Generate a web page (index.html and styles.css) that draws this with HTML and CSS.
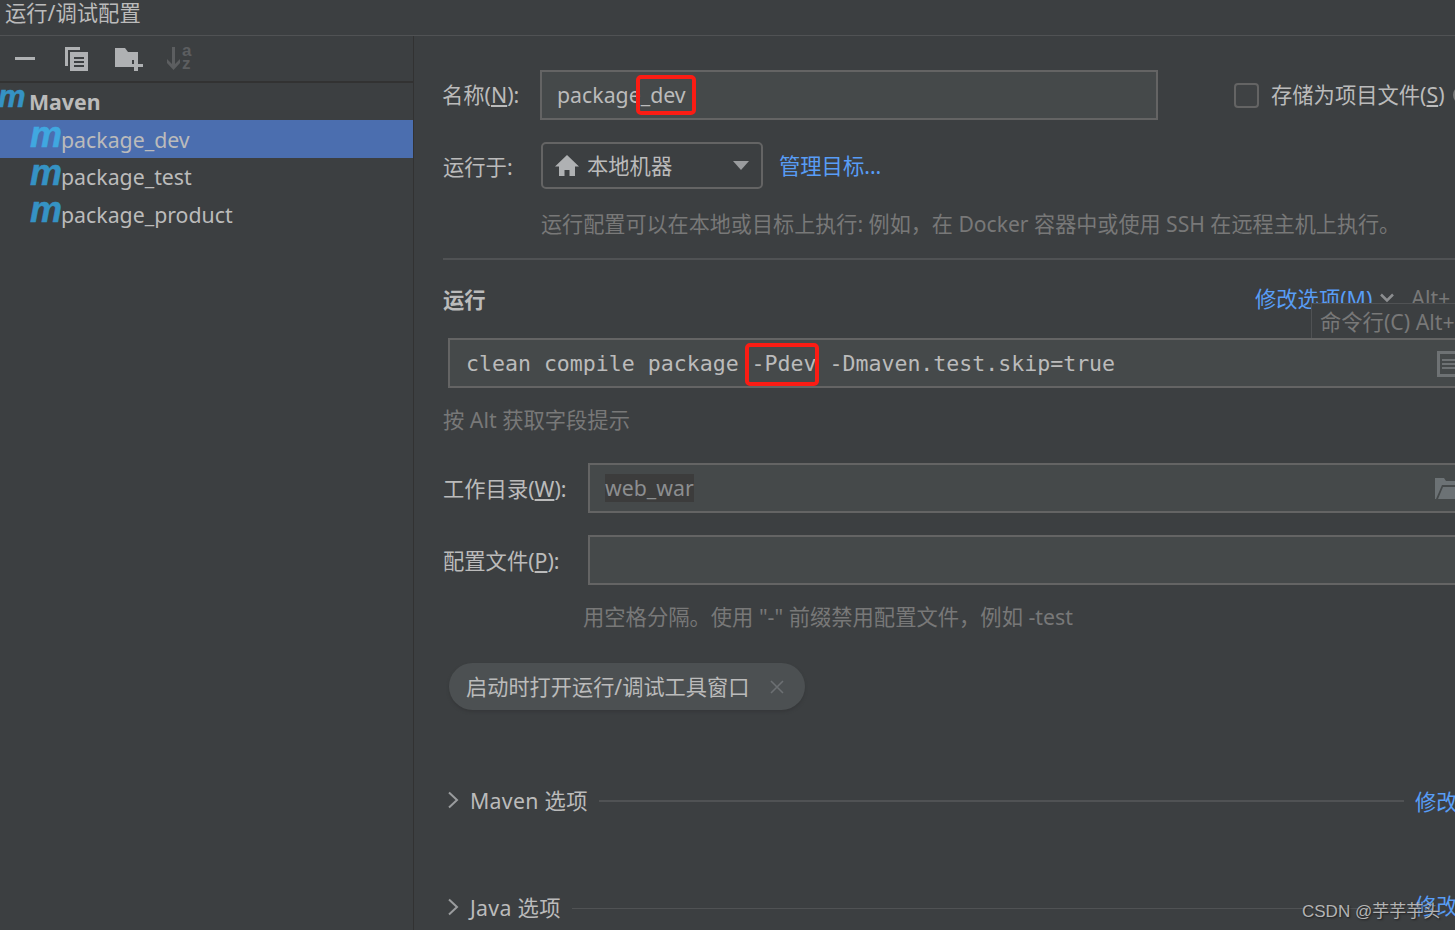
FILE: index.html
```html
<!DOCTYPE html>
<html lang="zh">
<head>
<meta charset="utf-8">
<title>运行/调试配置</title>
<link rel="stylesheet" href="styles.css">
</head>
<body>
<div class="app">
  <header class="titlebar">运行/调试配置</header>
  <div class="main">
    <aside class="sidebar">
      <div class="toolbar">
        <svg class="tool tool-minus" width="24" height="24" viewBox="0 0 24 24"><rect x="2" y="10" width="20" height="3" fill="#afb1b3"/></svg>
        <svg class="tool tool-copy" width="25" height="26" viewBox="0 0 25 26"><path d="M1 1h15v3H4v16H1z" fill="#afb1b3"/><path d="M6 6h18v19H6z" fill="#afb1b3"/><path d="M10 11h10v2H10zM10 15h10v2H10zM10 19h10v2H10z" fill="#3c3f41"/></svg>
        <svg class="tool tool-folder" width="28" height="24" viewBox="0 0 28 24"><path d="M0 1h10l3 4h10v8h-6v7H0z" fill="#afb1b3"/><path d="M19 12h4v5h5v3h-5v4h-4v-4h-5v-3h5z" fill="#afb1b3"/></svg>
        <svg class="tool-sort" width="16" height="26" viewBox="0 0 16 26"><path d="M6 1h3v17l5-5v4l-6.500 7L1 17v-4l5 5z" fill="#5c5e60"/></svg>
        <span class="sort-letters"><span>a</span><span>z</span></span>
      </div>
      <div class="tree">
        <div class="group"><span class="maven-m root">m</span><span class="group-name">Maven</span></div>
        <div class="item selected"><span class="maven-m bright">m</span><span>package_dev</span></div>
        <div class="item"><span class="maven-m">m</span><span>package_test</span></div>
        <div class="item"><span class="maven-m">m</span><span>package_product</span></div>
      </div>
    </aside>

    <section class="pane">
      <div class="row name-row">
        <label class="label name-label">名称(<u>N</u>):</label>
        <div class="field name-field">package_dev<span class="mark mark-name"></span></div>
        <span class="checkbox"></span>
        <span class="check-label">存储为项目文件(<u>S</u>)</span>
        <svg class="help" width="18" height="18" viewBox="0 0 18 18"><circle cx="9" cy="9" r="8" fill="none" stroke="#787878" stroke-width="2"/></svg>
      </div>

      <div class="row run-row">
        <label class="label run-label">运行于:</label>
        <div class="select">
          <svg width="26" height="24" viewBox="0 0 26 24"><path d="M13 1 25 12.500h-4V22h-5.500v-6h-5v6H5v-9.500H1z" fill="#afb1b3"/></svg>
          <span class="select-text">本地机器</span>
          <svg class="select-arrow" width="16" height="10" viewBox="0 0 16 10"><path d="M0 0h16L8 9z" fill="#9a9c9e"/></svg>
        </div>
        <a class="link manage">管理目标...</a>
      </div>

      <p class="hint run-hint">运行配置可以在本地或目标上执行: 例如，在 Docker 容器中或使用 SSH 在远程主机上执行。</p>

      <div class="divider"></div>

      <div class="run-head">
        <h2 class="heading">运行</h2>
        <a class="link modify">修改选项(<u>M</u>)</a>
        <svg class="modify-chevron" width="16" height="10" viewBox="0 0 16 10"><path d="M2 1.500l6 6 6-6" fill="none" stroke="#8c8e90" stroke-width="2.500"/></svg>
        <span class="shortcut">Alt+</span>
        <div class="tooltip">命令行(C) Alt+</div>
      </div>

      <div class="field command">
        <span>clean compile package -Pdev -Dmaven.test.skip=true</span>
        <span class="mark mark-cmd"></span>
        <svg class="cmd-icon" width="18" height="26" viewBox="0 0 18 26"><path d="M0 0h18v26H0z" fill="#6e7274"/><path d="M3 3h15v20H3z" fill="#45494a"/><path d="M5 8h13v2H5zM5 12h13v2H5zM5 16h13v2H5z" fill="#6e7274"/></svg>
      </div>

      <p class="hint alt-hint">按 Alt 获取字段提示</p>

      <div class="row dir-row">
        <label class="label wide-label">工作目录(<u>W</u>):</label>
        <div class="field wide-field"><span class="macro">web_war</span>
          <svg class="folder" width="24" height="22" viewBox="0 0 24 22"><path d="M0 0h9l2 3h13v4H7L1 21H0z" fill="#6c7275"/><path d="M8 9h16v12H3z" fill="#6c7275"/></svg>
        </div>
      </div>

      <div class="row cfg-row">
        <label class="label wide-label">配置文件(<u>P</u>):</label>
        <div class="field wide-field"></div>
      </div>

      <p class="hint cfg-hint">用空格分隔。使用 "-" 前缀禁用配置文件，例如 -test</p>

      <div class="chip">
        <span class="chip-text">启动时打开运行/调试工具窗口</span>
        <svg class="chip-x" width="16" height="16" viewBox="0 0 16 16"><path d="M2 2l12 12M14 2 2 14" stroke="#6c7073" stroke-width="1.600" fill="none"/></svg>
      </div>

      <div class="section maven-section">
        <svg class="chevron" width="12" height="18" viewBox="0 0 12 18"><path d="M2 1.500 10 9l-8 7.500" fill="none" stroke="#9a9c9e" stroke-width="2"/></svg>
        <span class="section-title">Maven 选项</span>
        <span class="section-line"></span>
        <a class="link section-link">修改选项</a>
      </div>

      <div class="section java-section">
        <svg class="chevron" width="12" height="18" viewBox="0 0 12 18"><path d="M2 1.500 10 9l-8 7.500" fill="none" stroke="#9a9c9e" stroke-width="2"/></svg>
        <span class="section-title">Java 选项</span>
        <span class="section-line thin"></span>
        <a class="link section-link raised">修改选项</a>
      </div>

      <div class="watermark">CSDN @芋芋芋头</div>
    </section>
  </div>
</div>
</body>
</html>
```

FILE: styles.css
```css
* { box-sizing: border-box; }

html, body {
  margin: 0;
  height: 100%;
  background: #3c3f41;
}

body {
  font-family: "Noto Sans", "Noto Sans CJK SC", sans-serif;
  font-size: 21.300px;
  color: #bbbbbb;
  overflow: hidden;
}

.app {
  width: 1455px;
  height: 930px;
  display: flex;
  flex-direction: column;
  overflow: hidden;
}

.titlebar {
  height: 36px;
  flex: none;
  padding-left: 5px;
  line-height: 25px;
  border-bottom: 1px solid #505254;
  white-space: nowrap;
}

.main {
  flex: 1;
  display: flex;
  min-height: 0;
}

/* sidebar */
.sidebar {
  width: 414px;
  flex: none;
  border-right: 1px solid #323232;
}

.toolbar {
  height: 47px;
  display: flex;
  align-items: center;
  padding: 0 0 0 13px;
  border-bottom: 2px solid #323232;
}

.tool, .tool-sort { flex: none; }
.tool-minus { margin-right: 27px; }
.tool-copy { margin-right: 26px; }
.tool-folder { margin-right: 23px; }

.sort-letters {
  display: flex;
  flex-direction: column;
  font: bold 17px/13px "Liberation Sans", sans-serif;
  color: #5c5e60;
  margin-top: -3px;
}

.group, .item {
  display: flex;
  align-items: center;
  height: 38px;
  white-space: nowrap;
}

.group { height: 37px; }
.group-name { font-weight: 700; margin-left: 7px; }

.item { padding: 0 0 0 30px; }
.item:nth-child(3) { height: 37px; }
.item.selected { background: #4b6eaf; }

.maven-m {
  font: italic 700 36px/30px "Liberation Sans", sans-serif;
  color: #3592c4;
  -webkit-text-stroke: 0.500px currentColor;
  width: 31px;
  margin-top: -8px;
  flex: none;
  letter-spacing: -1px;
}

.maven-m.root { width: 24px; margin-left: -2px; margin-top: -9px; font-size: 31px; }
.maven-m.bright { color: #40a8e0; }

/* right pane */
.pane {
  flex: 1;
  min-width: 0;
  position: relative;
  padding: 34px 0 0 29px;
  overflow: hidden;
}

.row {
  display: flex;
  align-items: center;
  white-space: nowrap;
}

.label { flex: none; }

.field {
  position: relative;
  flex: none;
  background: #45494a;
  border: 2px solid #646464;
  white-space: nowrap;
}

.name-row { height: 50px; }
.name-label { width: 98px; margin-left: -1px; padding-bottom: 4px; }

.name-field {
  width: 618px;
  height: 50px;
  line-height: 46px;
  padding-left: 15px;
}

.mark {
  position: absolute;
  border: 4px solid #fb1c14;
  border-radius: 5px;
}

.mark-name { left: 94px; top: 3px; width: 60px; height: 40px; }

.checkbox {
  width: 25px;
  height: 25px;
  flex: none;
  margin-left: 76px;
  border: 2px solid #646464;
  border-radius: 4px;
  background: #3f4244;
}

.check-label { margin-left: 12px; padding-bottom: 4px; }
.help { flex: none; margin-left: 8px; }

.run-row { height: 47px; margin-top: 22px; }
.run-label { width: 98px; padding-bottom: 1px; }

.select {
  width: 222px;
  height: 47px;
  flex: none;
  display: flex;
  align-items: center;
  padding-left: 11px;
  border: 2px solid #646464;
  border-radius: 5px;
}

.select-text { margin-left: 7px; padding-bottom: 3px; }
.select-arrow { margin-left: 61px; }

.link { color: #589df6; }
.manage { margin-left: 16px; padding-bottom: 3px; }

.hint {
  margin: 0;
  color: #787878;
  white-space: nowrap;
  line-height: 30px;
}

.run-hint { margin: 20px 0 0 98px; font-size: 21.100px; }

.divider {
  height: 2px;
  margin-top: 19px;
  background: #505254;
}

.run-head {
  position: relative;
  display: flex;
  align-items: center;
  height: 40px;
  margin-top: 18px;
  white-space: nowrap;
}

.heading {
  margin: 0;
  font-size: inherit;
  font-weight: 700;
  width: 812px;
  flex: none;
}

.modify, .shortcut { padding-bottom: 2px; }
.modify-chevron { margin-left: 7px; flex: none; }
.shortcut { margin-left: 16px; color: #787878; }

.tooltip {
  position: absolute;
  left: 868px;
  top: 25px;
  width: 200px;
  height: 39px;
  line-height: 35px;
  padding-left: 8px;
  background: #3c3f41;
  border: 1px solid #505254;
  color: #787878;
}

.command {
  width: 1030px;
  height: 50px;
  margin: 20px 0 0 5px;
  padding-left: 16px;
  line-height: 48px;
  font-family: "DejaVu Sans Mono", monospace;
  font-size: 21.570px;
}

.mark-cmd { left: 295px; top: 3px; width: 74px; height: 43px; }
.cmd-icon { position: absolute; left: 987px; top: 11px; }

.alt-hint { margin-top: 17px; }

.dir-row { margin-top: 28px; }
.cfg-row { margin-top: 22px; }
.wide-label { width: 145px; padding-bottom: 2px; }

.wide-field {
  width: 900px;
  height: 50px;
  line-height: 46px;
  padding-left: 15px;
}

.macro {
  background: #3c3c3c;
  color: #8c8e90;
  display: inline-block;
  line-height: 28px;
}

.folder { position: absolute; left: 845px; top: 13px; }

.cfg-hint { margin: 17px 0 0 140px; }

.chip {
  width: 356px;
  height: 47px;
  margin: 31px 0 0 6px;
  display: flex;
  align-items: center;
  padding-left: 17px;
  background: #4c5052;
  border-radius: 24px;
  box-shadow: 0 2px 3px #36383a;
  white-space: nowrap;
}

.chip-text { padding-bottom: 3px; font-size: 21.200px; }
.chip-x { margin-left: 20px; flex: none; }

.section {
  display: flex;
  align-items: center;
  width: 1012px;
  height: 30px;
  white-space: nowrap;
}

.maven-section { margin-top: 76px; }
.java-section { margin-top: 77px; }

.chevron { flex: none; margin-left: 4px; margin-top: -2px; }
.section-title { margin-left: 11px; margin-right: 11px; flex: none; padding-bottom: 4px; letter-spacing: 0.300px; }
.section-line { flex: 1; height: 2px; background: #505254; }
.section-line.thin { height: 1px; }
.section-link { flex: none; width: 40px; margin-left: 11px; padding-bottom: 2px; }
.raised { position: relative; top: -3px; }

.watermark {
  position: absolute;
  left: 888px;
  top: 865px;
  font: 17px/22px "Liberation Sans", "Noto Sans CJK SC", sans-serif;
  color: #b4b4b4;
  text-shadow: 1px 1px 2px #1e1e1e;
  white-space: nowrap;
}
```
